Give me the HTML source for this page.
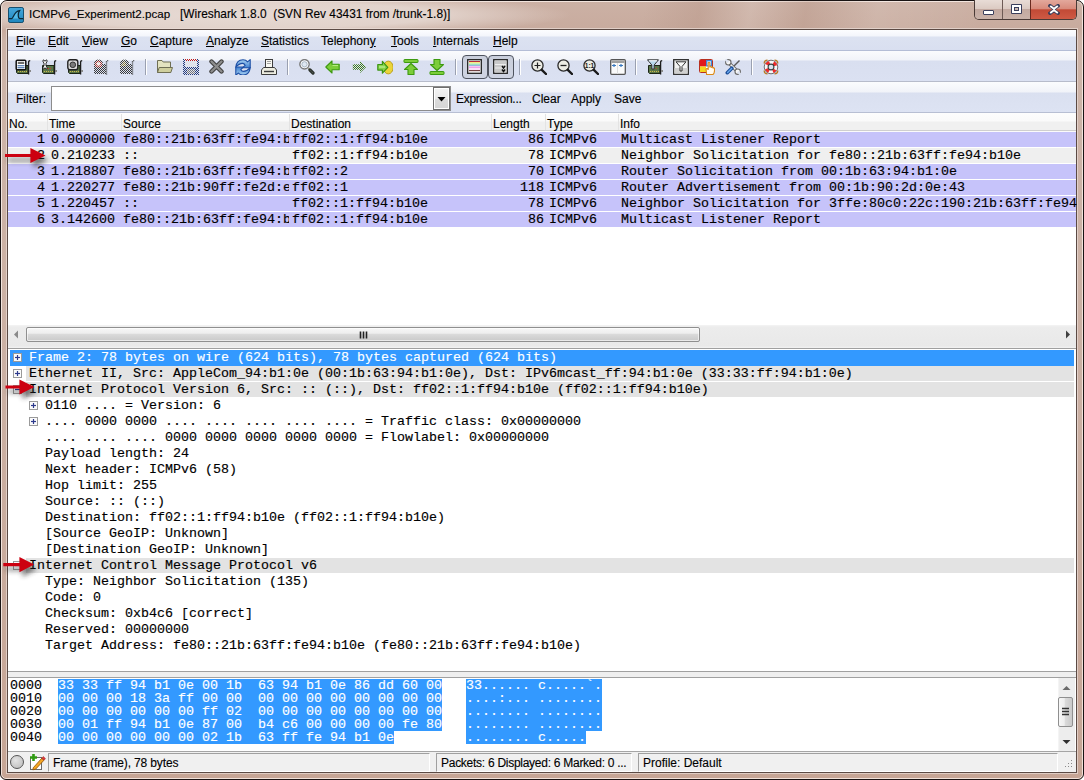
<!DOCTYPE html><html><head><meta charset="utf-8"><style>
*{margin:0;padding:0;box-sizing:border-box}
html,body{width:1084px;height:780px;overflow:hidden;background:#fff}
body{position:relative;font-family:"Liberation Sans",sans-serif}
.ab{position:absolute}
.mono{font-family:"Liberation Mono",monospace;font-size:13.333px;white-space:pre;line-height:16px;color:#000;-webkit-text-stroke:0.15px currentColor}
.ui{font-family:"Liberation Sans",sans-serif;font-size:12px;white-space:pre;color:#000;line-height:14px;-webkit-text-stroke:0.12px currentColor}
#frame{position:absolute;left:0;top:0;width:1084px;height:780px;border:1px solid #1a1414;border-radius:7px 7px 6px 6px;
 background:linear-gradient(to bottom,#ccb1a5 0,#c8ab9e 29px,#cdb4a8 40px,#cbb0a3 400px,#c6a595 780px);overflow:hidden}
#frame:before{content:"";position:absolute;left:0;top:0;right:0;bottom:0;border:1px solid rgba(255,245,240,.75);border-radius:6px 6px 5px 5px}
#client{position:absolute;left:7px;top:29px;width:1070px;height:744px;border:1px solid #5b4a44;background:#fff;box-shadow:0 0 0 1px rgba(235,222,216,.7)}
.bar{position:absolute;left:0;width:1068px}
</style></head><body>
<div id="frame">
<div class="ab" style="left:0;top:0;width:640px;height:29px;background:radial-gradient(ellipse 330px 22px at 240px 14px,rgba(232,220,214,.95) 0,rgba(232,220,214,.8) 60%,rgba(232,220,214,0) 100%)"></div>
<div class="ab" style="left:560px;top:0;width:420px;height:29px;background:linear-gradient(100deg,rgba(255,255,255,0) 0,rgba(255,255,255,0) 20%,rgba(180,145,130,.35) 33%,rgba(255,255,255,.12) 45%,rgba(180,145,130,.3) 58%,rgba(255,255,255,.1) 75%,rgba(255,255,255,0) 100%)"></div>
</div>
<svg class="ab" style="left:8px;top:7px" width="16" height="16" viewBox="0 0 16 16">
<defs><linearGradient id="wsg" x1="0" y1="0" x2="0" y2="1"><stop offset="0" stop-color="#46a8dc"/><stop offset="1" stop-color="#1f86bd"/></linearGradient></defs>
<rect x="0.5" y="0.5" width="15" height="15" rx="1.6" fill="url(#wsg)" stroke="#174f6e"/>
<path d="M4 11.5 C5.5 11.5 6 4.5 11.5 3.8 C9.8 6.2 10 11.5 11.8 11.5Z" fill="#5cc4f0" opacity=".8"/>
<path d="M0.8 11.5 H3.8 C5.4 11.5 5.8 4.2 11.6 3.6 C9.6 6.2 9.9 11.5 11.8 11.5 H15.2" fill="none" stroke="#0c2a3a" stroke-width="1.25"/>
</svg>
<div class="ab ui" style="left:29px;top:7px;font-size:11.6px;color:#000">ICMPv6_Experiment2.pcap</div>
<div class="ab ui" style="left:180px;top:7px;font-size:11.9px;color:#000">[Wireshark 1.8.0  (SVN Rev 43431 from /trunk-1.8)]</div>
<div class="ab" style="left:974px;top:0;width:103px;height:20px;border:1px solid #4a3a36;border-top:none;border-radius:0 0 5px 5px;overflow:hidden;background:#cbb3a8">
<div class="ab" style="left:0;top:0;width:27px;height:19px;background:linear-gradient(#e8dcd6 0,#dccbc3 45%,#c3a9a0 50%,#c9b2a9 100%)"></div>
<div class="ab" style="left:27px;top:0;width:1px;height:19px;background:#6d5a55"></div>
<div class="ab" style="left:28px;top:0;width:27px;height:19px;background:linear-gradient(#e8dcd6 0,#dccbc3 45%,#c3a9a0 50%,#c9b2a9 100%)"></div>
<div class="ab" style="left:55px;top:0;width:1px;height:19px;background:#6a2a20"></div>
<div class="ab" style="left:56px;top:0;width:46px;height:19px;background:linear-gradient(#e3a89c 0,#d88b7c 45%,#c24a36 52%,#cf5a44 100%)"></div>
<div class="ab" style="left:8px;top:10px;width:11px;height:5px;background:#fff;border:1px solid #3b3f5c;border-radius:1px"></div>
<div class="ab" style="left:36px;top:4px;width:11px;height:10px;background:#3b3f5c;border-radius:1px;padding:1px"><div style="width:9px;height:8px;background:#fff;padding:2px 2px"><div style="width:5px;height:4px;background:#3b3f5c;padding:1px"><div style="width:3px;height:2px;background:#cdb9b1"></div></div></div></div>
<svg class="ab" style="left:73px;top:4px" width="12" height="11" viewBox="0 0 12 11"><path d="M2 1.8 L6 4.6 L10 1.8 M2 9.2 L6 6.4 L10 9.2" stroke="#3b3f5c" stroke-width="3.6" fill="none" stroke-linecap="square"/><path d="M2.2 2 L6 4.8 L9.8 2 M2.2 9 L6 6.2 L9.8 9" stroke="#fff" stroke-width="1.8" fill="none"/></svg>
</div>
<div id="client">
<div class="bar" style="top:0;height:20px;background:linear-gradient(#fcfdff 0,#f3f5fb 6px,#dce2f1 7px,#d9dff0 20px)"></div>
<div class="bar" style="top:20px;height:1px;background:#b4bdd6"></div>
<div class="ab ui" style="left:8px;top:4px;text-decoration-thickness:1px"><u>F</u>ile</div>
<div class="ab ui" style="left:40px;top:4px;text-decoration-thickness:1px"><u>E</u>dit</div>
<div class="ab ui" style="left:74px;top:4px;text-decoration-thickness:1px"><u>V</u>iew</div>
<div class="ab ui" style="left:113px;top:4px;text-decoration-thickness:1px"><u>G</u>o</div>
<div class="ab ui" style="left:142px;top:4px;text-decoration-thickness:1px"><u>C</u>apture</div>
<div class="ab ui" style="left:198px;top:4px;text-decoration-thickness:1px"><u>A</u>nalyze</div>
<div class="ab ui" style="left:253px;top:4px;text-decoration-thickness:1px"><u>S</u>tatistics</div>
<div class="ab ui" style="left:313px;top:4px;text-decoration-thickness:1px">Telephon<u>y</u></div>
<div class="ab ui" style="left:383px;top:4px;text-decoration-thickness:1px"><u>T</u>ools</div>
<div class="ab ui" style="left:425px;top:4px;text-decoration-thickness:1px"><u>I</u>nternals</div>
<div class="ab ui" style="left:485px;top:4px;text-decoration-thickness:1px"><u>H</u>elp</div>
<div class="bar" style="top:21px;height:30px;background:linear-gradient(#fafbfd 0,#f1f3f9 9px,#d9dff0 10px,#dbe1f2 30px)"></div>
<div class="bar" style="top:51px;height:1px;background:#b7bccb"></div>
<div class="bar" style="top:52px;height:30px;background:linear-gradient(#fbfcfe 0,#f1f3f9 10px,#dae0f0 11px,#dde3f3 30px)"></div>
<div class="bar" style="top:82px;height:1px;background:#b8bfd3"></div>
<div class="ab ui" style="left:8px;top:62px">Filter:</div>
<div class="ab" style="left:43px;top:56px;width:400px;height:25px;background:#fff;border:1px solid #8c8c8c"></div>
<div class="ab" style="left:425px;top:57px;width:17px;height:23px;border:1px solid #6e6e6e;background:#fff;padding:1px"><div style="width:13px;height:19px;background:linear-gradient(#f2f2f2,#e9e9e9 50%,#dcdcdc 52%,#d6d6d6)"></div></div>
<svg class="ab" style="left:429px;top:67px" width="9" height="5"><path d="M0.5 0H8.5L4.5 4.5Z" fill="#000"/></svg>
<div class="ab ui" style="left:448px;top:62px;letter-spacing:-0.3px">Expression...</div>
<div class="ab ui" style="left:524px;top:62px;letter-spacing:0px">Clear</div>
<div class="ab ui" style="left:563px;top:62px;letter-spacing:0px">Apply</div>
<div class="ab ui" style="left:606px;top:62px;letter-spacing:0px">Save</div>
<div class="bar" style="top:83px;height:17px;background:linear-gradient(#fdfdfd 0,#fafafa 8px,#f0f0f0 9px,#f0f0f0 17px)"></div>
<div class="bar" style="top:100px;height:1px;background:#cfcfcf"></div>
<div class="bar" style="top:101px;height:1px;background:#fbfbfb"></div>
<div class="ab" style="left:39px;top:84px;width:1px;height:16px;background:#e3e3e3"></div>
<div class="ab" style="left:113px;top:84px;width:1px;height:16px;background:#e3e3e3"></div>
<div class="ab" style="left:281px;top:84px;width:1px;height:16px;background:#e3e3e3"></div>
<div class="ab" style="left:483px;top:84px;width:1px;height:16px;background:#e3e3e3"></div>
<div class="ab" style="left:537px;top:84px;width:1px;height:16px;background:#e3e3e3"></div>
<div class="ab" style="left:610px;top:84px;width:1px;height:16px;background:#e3e3e3"></div>
<div class="ab ui" style="left:1px;top:87px">No.</div>
<div class="ab ui" style="left:41px;top:87px">Time</div>
<div class="ab ui" style="left:115px;top:87px">Source</div>
<div class="ab ui" style="left:283px;top:87px">Destination</div>
<div class="ab ui" style="left:485px;top:87px">Length</div>
<div class="ab ui" style="left:539px;top:87px">Type</div>
<div class="ab ui" style="left:612px;top:87px">Info</div>
<div class="bar" style="top:102px;height:15px;background:#c6c3fa"></div>
<div class="ab mono" style="left:29px;top:102px">1</div>
<div class="ab mono" style="left:43px;top:102px">0.000000</div>
<div class="ab mono" style="left:115px;top:102px;width:166px;overflow:hidden">fe80::21b:63ff:fe94:b10e</div>
<div class="ab mono" style="left:284px;top:102px">ff02::1:ff94:b10e</div>
<div class="ab mono" style="left:520px;top:102px">86</div>
<div class="ab mono" style="left:541px;top:102px">ICMPv6</div>
<div class="ab mono" style="left:613px;top:102px;width:456px;overflow:hidden">Multicast Listener Report</div>
<div class="bar" style="top:118px;height:15px;background:#efefef"></div>
<div class="ab mono" style="left:29px;top:118px">2</div>
<div class="ab mono" style="left:43px;top:118px">0.210233</div>
<div class="ab mono" style="left:115px;top:118px;width:166px;overflow:hidden">::</div>
<div class="ab mono" style="left:284px;top:118px">ff02::1:ff94:b10e</div>
<div class="ab mono" style="left:520px;top:118px">78</div>
<div class="ab mono" style="left:541px;top:118px">ICMPv6</div>
<div class="ab mono" style="left:613px;top:118px;width:456px;overflow:hidden">Neighbor Solicitation for fe80::21b:63ff:fe94:b10e</div>
<div class="bar" style="top:134px;height:15px;background:#c6c3fa"></div>
<div class="ab mono" style="left:29px;top:134px">3</div>
<div class="ab mono" style="left:43px;top:134px">1.218807</div>
<div class="ab mono" style="left:115px;top:134px;width:166px;overflow:hidden">fe80::21b:63ff:fe94:b10e</div>
<div class="ab mono" style="left:284px;top:134px">ff02::2</div>
<div class="ab mono" style="left:520px;top:134px">70</div>
<div class="ab mono" style="left:541px;top:134px">ICMPv6</div>
<div class="ab mono" style="left:613px;top:134px;width:456px;overflow:hidden">Router Solicitation from 00:1b:63:94:b1:0e</div>
<div class="bar" style="top:150px;height:15px;background:#c6c3fa"></div>
<div class="ab mono" style="left:29px;top:150px">4</div>
<div class="ab mono" style="left:43px;top:150px">1.220277</div>
<div class="ab mono" style="left:115px;top:150px;width:166px;overflow:hidden">fe80::21b:90ff:fe2d:e43</div>
<div class="ab mono" style="left:284px;top:150px">ff02::1</div>
<div class="ab mono" style="left:512px;top:150px">118</div>
<div class="ab mono" style="left:541px;top:150px">ICMPv6</div>
<div class="ab mono" style="left:613px;top:150px;width:456px;overflow:hidden">Router Advertisement from 00:1b:90:2d:0e:43</div>
<div class="bar" style="top:166px;height:15px;background:#c6c3fa"></div>
<div class="ab mono" style="left:29px;top:166px">5</div>
<div class="ab mono" style="left:43px;top:166px">1.220457</div>
<div class="ab mono" style="left:115px;top:166px;width:166px;overflow:hidden">::</div>
<div class="ab mono" style="left:284px;top:166px">ff02::1:ff94:b10e</div>
<div class="ab mono" style="left:520px;top:166px">78</div>
<div class="ab mono" style="left:541px;top:166px">ICMPv6</div>
<div class="ab mono" style="left:613px;top:166px;width:456px;overflow:hidden">Neighbor Solicitation for 3ffe:80c0:22c:190:21b:63ff:fe94:b10e</div>
<div class="bar" style="top:182px;height:15px;background:#c6c3fa"></div>
<div class="ab mono" style="left:29px;top:182px">6</div>
<div class="ab mono" style="left:43px;top:182px">3.142600</div>
<div class="ab mono" style="left:115px;top:182px;width:166px;overflow:hidden">fe80::21b:63ff:fe94:b10e</div>
<div class="ab mono" style="left:284px;top:182px">ff02::1:ff94:b10e</div>
<div class="ab mono" style="left:520px;top:182px">86</div>
<div class="ab mono" style="left:541px;top:182px">ICMPv6</div>
<div class="ab mono" style="left:613px;top:182px;width:456px;overflow:hidden">Multicast Listener Report</div>
<div class="bar" style="top:295px;height:23px;background:linear-gradient(#f4f4f4 0,#ececec 2px,#e9e9e9 21px,#f2f2f2 23px)"></div>
<svg class="ab" style="left:5px;top:300px" width="8" height="9"><path d="M5 0.5 L1 4.5 L5 8.5Z" fill="#8a8a8a"/></svg>
<svg class="ab" style="left:1056px;top:300px" width="8" height="9"><path d="M2 0.5 L6 4.5 L2 8.5Z" fill="#404040"/></svg>
<div class="ab" style="left:18px;top:297px;width:674px;height:15px;border:1px solid #8f8f8f;border-radius:2px;background:linear-gradient(#f7f7f7 0,#eeeeee 40%,#dadada 50%,#c9c9c9 100%);box-shadow:inset 0 0 0 1px rgba(255,255,255,.6)"></div>
<svg class="ab" style="left:351px;top:301px" width="9" height="8"><path d="M1.5 0.5V7.5M4.5 0.5V7.5M7.5 0.5V7.5" stroke="#222" stroke-width="1.6"/></svg>
<div class="bar" style="top:318px;height:1px;background:#a0a0a0"></div>
<div class="ab" style="left:2px;top:320px;width:1064px;height:16px;background:#3399ff"></div>
<svg class="ab" style="left:5px;top:323px" width="9" height="9"><rect x="0.5" y="0.5" width="8" height="8" fill="#fbfbfb" stroke="#9a9a9a"/><path d="M2 4.5H7" stroke="#2d3a8c" stroke-width="1.2"/><path d="M4.5 2V7" stroke="#2d3a8c" stroke-width="1.2"/></svg>
<div class="ab mono" style="left:21px;top:320px;color:#fff">Frame 2: 78 bytes on wire (624 bits), 78 bytes captured (624 bits)</div>
<div class="ab" style="left:18px;top:336px;width:1048px;height:15px;background:#e3e3e3"></div>
<svg class="ab" style="left:5px;top:339px" width="9" height="9"><rect x="0.5" y="0.5" width="8" height="8" fill="#fbfbfb" stroke="#9a9a9a"/><path d="M2 4.5H7" stroke="#2d3a8c" stroke-width="1.2"/><path d="M4.5 2V7" stroke="#2d3a8c" stroke-width="1.2"/></svg>
<div class="ab mono" style="left:21px;top:336px;color:#000">Ethernet II, Src: AppleCom_94:b1:0e (00:1b:63:94:b1:0e), Dst: IPv6mcast_ff:94:b1:0e (33:33:ff:94:b1:0e)</div>
<div class="ab" style="left:18px;top:352px;width:1048px;height:15px;background:#e3e3e3"></div>
<svg class="ab" style="left:5px;top:355px" width="9" height="9"><rect x="0.5" y="0.5" width="8" height="8" fill="#fbfbfb" stroke="#9a9a9a"/><path d="M2 4.5H7" stroke="#2d3a8c" stroke-width="1.2"/></svg>
<div class="ab mono" style="left:21px;top:352px;color:#000">Internet Protocol Version 6, Src: :: (::), Dst: ff02::1:ff94:b10e (ff02::1:ff94:b10e)</div>
<svg class="ab" style="left:21px;top:371px" width="9" height="9"><rect x="0.5" y="0.5" width="8" height="8" fill="#fbfbfb" stroke="#9a9a9a"/><path d="M2 4.5H7" stroke="#2d3a8c" stroke-width="1.2"/><path d="M4.5 2V7" stroke="#2d3a8c" stroke-width="1.2"/></svg>
<div class="ab mono" style="left:37px;top:368px;color:#000">0110 .... = Version: 6</div>
<svg class="ab" style="left:21px;top:387px" width="9" height="9"><rect x="0.5" y="0.5" width="8" height="8" fill="#fbfbfb" stroke="#9a9a9a"/><path d="M2 4.5H7" stroke="#2d3a8c" stroke-width="1.2"/><path d="M4.5 2V7" stroke="#2d3a8c" stroke-width="1.2"/></svg>
<div class="ab mono" style="left:37px;top:384px;color:#000">.... 0000 0000 .... .... .... .... .... = Traffic class: 0x00000000</div>
<div class="ab mono" style="left:37px;top:400px;color:#000">.... .... .... 0000 0000 0000 0000 0000 = Flowlabel: 0x00000000</div>
<div class="ab mono" style="left:37px;top:416px;color:#000">Payload length: 24</div>
<div class="ab mono" style="left:37px;top:432px;color:#000">Next header: ICMPv6 (58)</div>
<div class="ab mono" style="left:37px;top:448px;color:#000">Hop limit: 255</div>
<div class="ab mono" style="left:37px;top:464px;color:#000">Source: :: (::)</div>
<div class="ab mono" style="left:37px;top:480px;color:#000">Destination: ff02::1:ff94:b10e (ff02::1:ff94:b10e)</div>
<div class="ab mono" style="left:37px;top:496px;color:#000">[Source GeoIP: Unknown]</div>
<div class="ab mono" style="left:37px;top:512px;color:#000">[Destination GeoIP: Unknown]</div>
<div class="ab" style="left:18px;top:528px;width:1048px;height:15px;background:#e3e3e3"></div>
<svg class="ab" style="left:5px;top:531px" width="9" height="9"><rect x="0.5" y="0.5" width="8" height="8" fill="#fbfbfb" stroke="#9a9a9a"/><path d="M2 4.5H7" stroke="#2d3a8c" stroke-width="1.2"/></svg>
<div class="ab mono" style="left:21px;top:528px;color:#000">Internet Control Message Protocol v6</div>
<div class="ab mono" style="left:37px;top:544px;color:#000">Type: Neighbor Solicitation (135)</div>
<div class="ab mono" style="left:37px;top:560px;color:#000">Code: 0</div>
<div class="ab mono" style="left:37px;top:576px;color:#000">Checksum: 0xb4c6 [correct]</div>
<div class="ab mono" style="left:37px;top:592px;color:#000">Reserved: 00000000</div>
<div class="ab mono" style="left:37px;top:608px;color:#000">Target Address: fe80::21b:63ff:fe94:b10e (fe80::21b:63ff:fe94:b10e)</div>
<div class="bar" style="top:641px;height:1px;background:#a0a0a0"></div>
<div class="bar" style="top:642px;height:5px;background:#efefef"></div>
<div class="bar" style="top:647px;height:1px;background:#a0a0a0"></div>
<div class="ab mono" style="left:2px;top:649px;line-height:13px">0000</div>
<div class="ab mono" style="left:50px;top:649px;line-height:13px;background:#3399ff;color:#fff">33 33 ff 94 b1 0e 00 1b  63 94 b1 0e 86 dd 60 00</div>
<div class="ab mono" style="left:458px;top:649px;line-height:13px;background:#3399ff;color:#fff">33...... c.....`.</div>
<div class="ab mono" style="left:2px;top:662px;line-height:13px">0010</div>
<div class="ab mono" style="left:50px;top:662px;line-height:13px;background:#3399ff;color:#fff">00 00 00 18 3a ff 00 00  00 00 00 00 00 00 00 00</div>
<div class="ab mono" style="left:458px;top:662px;line-height:13px;background:#3399ff;color:#fff">....:... ........</div>
<div class="ab mono" style="left:2px;top:675px;line-height:13px">0020</div>
<div class="ab mono" style="left:50px;top:675px;line-height:13px;background:#3399ff;color:#fff">00 00 00 00 00 00 ff 02  00 00 00 00 00 00 00 00</div>
<div class="ab mono" style="left:458px;top:675px;line-height:13px;background:#3399ff;color:#fff">........ ........</div>
<div class="ab mono" style="left:2px;top:688px;line-height:13px">0030</div>
<div class="ab mono" style="left:50px;top:688px;line-height:13px;background:#3399ff;color:#fff">00 01 ff 94 b1 0e 87 00  b4 c6 00 00 00 00 fe 80</div>
<div class="ab mono" style="left:458px;top:688px;line-height:13px;background:#3399ff;color:#fff">........ ........</div>
<div class="ab mono" style="left:2px;top:701px;line-height:13px">0040</div>
<div class="ab mono" style="left:50px;top:701px;line-height:13px;background:#3399ff;color:#fff">00 00 00 00 00 00 02 1b  63 ff fe 94 b1 0e</div>
<div class="ab mono" style="left:458px;top:701px;line-height:13px;background:#3399ff;color:#fff">........ c.....</div>
<div class="ab" style="left:1050px;top:648px;width:17px;height:73px;background:#ededed;border-left:1px solid #f4f4f4"></div>
<svg class="ab" style="left:1054px;top:655px" width="9" height="6"><path d="M0.5 5L4.5 1L8.5 5Z" fill="#6a6a6a"/></svg>
<svg class="ab" style="left:1054px;top:709px" width="9" height="6"><path d="M0.5 1L4.5 5L8.5 1Z" fill="#303030"/></svg>
<div class="ab" style="left:1050px;top:667px;width:15px;height:30px;border:1px solid #8f8f8f;border-radius:2px;background:linear-gradient(to right,#f7f7f7 0,#eeeeee 40%,#dadada 50%,#c9c9c9 100%)"></div>
<svg class="ab" style="left:1053px;top:677px" width="9" height="9"><path d="M1 1.5H8M1 4.5H8M1 7.5H8" stroke="#333" stroke-width="1.4"/></svg>
<div class="bar" style="top:721px;height:1px;background:#a5a5a5"></div>
<div class="bar" style="top:722px;height:20px;background:#f0f0f0"></div>
<div class="ab" style="left:2px;top:725px;width:14px;height:14px;border-radius:50%;border:1px solid #555;background:radial-gradient(circle at 40% 35%,#e4e4e4,#b9b9b9)"></div>
<svg class="ab" style="left:21px;top:723px" width="17" height="18" viewBox="0 0 17 18">
<rect x="1.5" y="4.5" width="11" height="12" fill="#fff" stroke="#6a6a6a"/>
<path d="M1 4.5H8M4.5 1V8" stroke="#2f9a12" stroke-width="2.6"/>
<path d="M4.2 14.8 L12.8 5.2 L15 7.2 L6.6 16.2 L3.8 16.8Z" fill="#f5a623" stroke="#8a5008" stroke-width=".8"/>
<path d="M12.8 5.2 L14.2 3.6 L16.4 5.6 L15 7.2Z" fill="#e23a3a" stroke="#9a2020" stroke-width=".6"/>
</svg>
<div class="ab" style="left:40px;top:723px;width:382px;height:19px;border-top:1px solid #a0a0a0;border-left:1px solid #a0a0a0;border-bottom:1px solid #fff;border-right:1px solid #fff;background:#f0f0f0"></div>
<div class="ab" style="left:428px;top:723px;width:196px;height:19px;border-top:1px solid #a0a0a0;border-left:1px solid #a0a0a0;border-bottom:1px solid #fff;border-right:1px solid #fff;background:#f0f0f0"></div>
<div class="ab" style="left:630px;top:723px;width:420px;height:19px;border-top:1px solid #a0a0a0;border-left:1px solid #a0a0a0;border-bottom:1px solid #fff;border-right:1px solid #fff;background:#f0f0f0"></div>
<div class="ab ui" style="left:45px;top:726px;letter-spacing:-0.15px">Frame (frame), 78 bytes</div>
<div class="ab ui" style="left:433px;top:726px;letter-spacing:-0.27px">Packets: 6 Displayed: 6 Marked: 0 ...</div>
<div class="ab ui" style="left:635px;top:726px;letter-spacing:0px">Profile: Default</div>
<svg class="ab" style="left:1056px;top:729px" width="10" height="10"><g fill="#8a8a8a"><rect x="7" y="1" width="1" height="1"/><rect x="4" y="4" width="1" height="1"/><rect x="7" y="4" width="1" height="1"/><rect x="1" y="7" width="1" height="1"/><rect x="4" y="7" width="1" height="1"/><rect x="7" y="7" width="1" height="1"/></g></svg>
</div>
<div class="ab" style="left:462px;top:55px;width:26px;height:24px;border:1px solid #4e535e;border-radius:4px;background:linear-gradient(#c9cedb,#cfd4e2)"></div>
<div class="ab" style="left:488px;top:55px;width:26px;height:24px;border:1px solid #4e535e;border-radius:4px;background:linear-gradient(#c9cedb,#cfd4e2)"></div>
<div class="ab" style="left:145px;top:59px;width:1px;height:16px;background:#9aa0b0;box-shadow:1px 0 0 #fff"></div>
<div class="ab" style="left:287px;top:59px;width:1px;height:16px;background:#9aa0b0;box-shadow:1px 0 0 #fff"></div>
<div class="ab" style="left:455px;top:59px;width:1px;height:16px;background:#9aa0b0;box-shadow:1px 0 0 #fff"></div>
<div class="ab" style="left:519px;top:59px;width:1px;height:16px;background:#9aa0b0;box-shadow:1px 0 0 #fff"></div>
<div class="ab" style="left:635px;top:59px;width:1px;height:16px;background:#9aa0b0;box-shadow:1px 0 0 #fff"></div>
<div class="ab" style="left:751px;top:59px;width:1px;height:16px;background:#9aa0b0;box-shadow:1px 0 0 #fff"></div>
<svg class="ab" style="left:15px;top:59px" width="16" height="16" viewBox="0 0 16 16"><path d="M1.5 6.5H13V14.5H2.5L1.5 13.5Z" fill="#5a7548" stroke="#1c2616"/><path d="M3 12.5H12" stroke="#c9b94a" stroke-dasharray="1 1"/><path d="M6 9.5H8M9 9.5H10" stroke="#c04030" stroke-width="1"/><path d="M13.6 15.5V3.2Q13.6 1.6 15.2 1.6" stroke="#1d1d1d" stroke-width="1.3" fill="none"/><rect x="14" y="11" width="2" height="2" fill="#8a8a8a"/><rect x="1.2" y="1.2" width="9.6" height="9.6" rx="1" fill="#fff" stroke="#111" stroke-width="1.5"/><rect x="2.8" y="2.8" width="6.4" height="2.2" fill="#6e6e6e"/><path d="M2.5 6.7H9.5M2.5 8.7H9.5" stroke="#2f5f9f" stroke-width="1.1"/></svg>
<svg class="ab" style="left:41px;top:59px" width="16" height="16" viewBox="0 0 16 16"><path d="M1.5 6.5H13V14.5H2.5L1.5 13.5Z" fill="#5a7548" stroke="#1c2616"/><path d="M3 12.5H12" stroke="#c9b94a" stroke-dasharray="1 1"/><path d="M6 9.5H8M9 9.5H10" stroke="#c04030" stroke-width="1"/><path d="M13.6 15.5V3.2Q13.6 1.6 15.2 1.6" stroke="#1d1d1d" stroke-width="1.3" fill="none"/><rect x="14" y="11" width="2" height="2" fill="#8a8a8a"/><path d="M2 1.5Q2 0.5 3 1L3.5 2H4.5L5 1Q6 0.5 6 1.5V3L5 4V7L6 8V9.5Q6 10.5 5 10L4.5 9H3.5L3 10Q2 10.5 2 9.5V8L3 7V4L2 3Z" fill="#f4f4f4" stroke="#222" stroke-width=".9"/></svg>
<svg class="ab" style="left:67px;top:59px" width="16" height="16" viewBox="0 0 16 16"><path d="M1.5 6.5H13V14.5H2.5L1.5 13.5Z" fill="#5a7548" stroke="#1c2616"/><path d="M3 12.5H12" stroke="#c9b94a" stroke-dasharray="1 1"/><path d="M6 9.5H8M9 9.5H10" stroke="#c04030" stroke-width="1"/><path d="M13.6 15.5V3.2Q13.6 1.6 15.2 1.6" stroke="#1d1d1d" stroke-width="1.3" fill="none"/><rect x="14" y="11" width="2" height="2" fill="#8a8a8a"/><rect x="0.8" y="0.8" width="10" height="10" rx="2.2" fill="#d8d8d8" stroke="#222" stroke-width="1.4"/><circle cx="5.8" cy="5.8" r="2.8" fill="#7a7a7a" stroke="#333" stroke-width="1"/></svg>
<svg class="ab" style="left:93px;top:59px" width="16" height="16" viewBox="0 0 16 16"><defs><pattern id="ck1" width="2" height="2" patternUnits="userSpaceOnUse"><rect width="1" height="1" fill="#3a3a3a"/><rect x="1" y="1" width="1" height="1" fill="#3a3a3a"/></pattern><pattern id="ck2" width="2" height="2" patternUnits="userSpaceOnUse"><rect width="1" height="1" fill="#b03020"/><rect x="1" y="1" width="1" height="1" fill="#b03020"/></pattern></defs><path d="M1 5H13V15H2L1 14Z" fill="url(#ck1)"/><path d="M13.5 15.5V3.2Q13.5 1.6 15.2 1.6" stroke="#333" stroke-width="1.4" fill="none" stroke-dasharray="1 1"/><circle cx="5.5" cy="5" r="4.6" fill="url(#ck1)"/><circle cx="5.5" cy="5" r="3.6" fill="url(#ck2)"/><circle cx="5.5" cy="5" r="1.8" fill="#f2ecea"/></svg>
<svg class="ab" style="left:119px;top:59px" width="16" height="16" viewBox="0 0 16 16"><defs><pattern id="ck3" width="2" height="2" patternUnits="userSpaceOnUse"><rect width="1" height="1" fill="#8a7a30"/><rect x="1" y="1" width="1" height="1" fill="#8a7a30"/></pattern></defs><path d="M1 5H13V15H2L1 14Z" fill="url(#ck1)"/><path d="M13.5 15.5V3.2Q13.5 1.6 15.2 1.6" stroke="#333" stroke-width="1.4" fill="none" stroke-dasharray="1 1"/><circle cx="5.5" cy="5" r="4.6" fill="url(#ck1)"/><path d="M2 7Q3.5 2.5 6 1.5Q5.5 4 8.5 7Z" fill="url(#ck3)"/></svg>
<svg class="ab" style="left:157px;top:59px" width="16" height="16" viewBox="0 0 16 16"><path d="M0.5 1.5H5L6.2 3H13.5V13.5H0.5Z" fill="#e3e3c0" stroke="#6f6f55"/><path d="M2.2 8.5H15.5L13.8 13.5H0.5Z" fill="#cfcf9e" stroke="#6f6f55"/></svg>
<svg class="ab" style="left:183px;top:59px" width="16" height="16" viewBox="0 0 16 16"><defs><pattern id="ck4" width="2" height="2" patternUnits="userSpaceOnUse"><rect width="1" height="1" fill="#243a7a"/><rect x="1" y="1" width="1" height="1" fill="#243a7a"/></pattern><pattern id="ck5" width="2" height="2" patternUnits="userSpaceOnUse"><rect width="1" height="1" fill="#c01818"/><rect x="1" y="1" width="1" height="1" fill="#c01818"/></pattern><pattern id="ck6" width="2" height="2" patternUnits="userSpaceOnUse"><rect width="1" height="1" fill="#e8e8e8"/><rect x="1" y="1" width="1" height="1" fill="#e8e8e8"/></pattern><pattern id="ck7" width="2" height="2" patternUnits="userSpaceOnUse"><rect width="1" height="1" fill="#777"/><rect x="1" y="1" width="1" height="1" fill="#777"/></pattern></defs><rect x="0" y="0" width="16" height="16" fill="url(#ck4)"/><rect x="2" y="0" width="12" height="2" fill="url(#ck5)"/><rect x="2" y="2" width="12" height="6" fill="url(#ck6)"/><rect x="4" y="10" width="8" height="5" fill="url(#ck7)"/></svg>
<svg class="ab" style="left:209px;top:59px" width="16" height="16" viewBox="0 0 16 16"><path d="M2.5 2.5L12.5 12.5M12.5 2.5L2.5 12.5" stroke="#3e3e3e" stroke-width="4.4" stroke-linecap="round"/><path d="M2.5 2.5L12.5 12.5M12.5 2.5L2.5 12.5" stroke="#8c8c8c" stroke-width="2.4" stroke-linecap="round"/></svg>
<svg class="ab" style="left:235px;top:59px" width="16" height="16" viewBox="0 0 16 16"><defs><linearGradient id="rg" x1="0" y1="0" x2="0" y2="1"><stop offset="0" stop-color="#a9d2f2"/><stop offset="1" stop-color="#3f7fd0"/></linearGradient></defs><g id="rl"><path d="M0.8 8.2 Q1.6 0.8 8 0.8 Q11 0.8 12.6 2.8 L15.2 0.6 V8.8 H7.4 L10.2 6.4 Q9.2 4.4 7.6 4.4 Q4 4.4 0.8 8.2Z" fill="url(#rg)" stroke="#1d4fa5" stroke-width="1.1" stroke-linejoin="round"/></g><use href="#rl" transform="rotate(180 8 8.4)"/></svg>
<svg class="ab" style="left:261px;top:59px" width="16" height="16" viewBox="0 0 16 16"><rect x="4.5" y="0.5" width="7" height="8" fill="#f8f8f2" stroke="#3d3d3d"/><path d="M6 2.5H10M6 4.5H10" stroke="#8a8a8a" stroke-width=".8"/><path d="M2.5 8.5H13.5L15.5 11V15.5H0.5V11Z" fill="#ecece0" stroke="#3d3d3d"/><path d="M3 12.5H13" stroke="#3d3d3d" stroke-width="1.4"/></svg>
<svg class="ab" style="left:299px;top:59px" width="16" height="16" viewBox="0 0 16 16"><circle cx="5.5" cy="5.3" r="4.6" fill="#dfe8f2" stroke="#7d7d7d" stroke-width="1.6"/><circle cx="5.5" cy="5.3" r="3.5" fill="none" stroke="#fafafa" stroke-width=".9"/><circle cx="5.5" cy="5.3" r="2.6" fill="none" stroke="#8d9aa8" stroke-width=".6"/><path d="M9.3 9.2L10.6 10.5" stroke="#9a9a80" stroke-width="1.8"/><path d="M11 11L14 14" stroke="#2e3430" stroke-width="3.2" stroke-linecap="round"/><path d="M11.6 11.6L13.5 13.5" stroke="#7a8a7a" stroke-width=".8" stroke-dasharray="1 1"/></svg>
<svg class="ab" style="left:325px;top:59px" width="16" height="16" viewBox="0 0 16 16"><path d="M0.8 8L7 2V5.2H14.2V10.8H7V14Z" fill="#7ccd3a" stroke="#3d9a10" stroke-width="1.1" stroke-linejoin="round"/><path d="M7.5 6.5H13" stroke="#b5ec80" stroke-width="1"/></svg>
<svg class="ab" style="left:351px;top:59px" width="16" height="16" viewBox="0 0 16 16"><defs><pattern id="ck8" width="2" height="2" patternUnits="userSpaceOnUse"><rect width="1" height="1" fill="#3e7a1a"/><rect x="1" y="1" width="1" height="1" fill="#3e7a1a"/></pattern></defs><path d="M15.2 8L9 2V5.2H1.8V10.8H9V14Z" fill="url(#ck8)"/></svg>
<svg class="ab" style="left:377px;top:59px" width="16" height="16" viewBox="0 0 16 16"><ellipse cx="11.3" cy="8.5" rx="4.9" ry="6.4" fill="#ead43a" stroke="#b89a18" stroke-width=".9"/><path d="M0.8 5.5H5.4V2.4L10.8 8.3L5.4 14.2V11.1H0.8Z" fill="#86d44a" stroke="#3b9412" stroke-width="1.2" stroke-linejoin="round"/><path d="M2 8H8" stroke="#b8f090" stroke-width="1.4"/></svg>
<svg class="ab" style="left:403px;top:59px" width="16" height="16" viewBox="0 0 16 16"><rect x="1" y="0.5" width="14" height="3" rx=".5" fill="#7ccd3a" stroke="#3d9a10"/><path d="M8 4.5L14.5 10.5H11V15.5H5V10.5H1.5Z" fill="#7ccd3a" stroke="#3d9a10" stroke-width="1.1" stroke-linejoin="round"/></svg>
<svg class="ab" style="left:429px;top:59px" width="16" height="16" viewBox="0 0 16 16"><rect x="1" y="12.5" width="14" height="3" rx=".5" fill="#7ccd3a" stroke="#3d9a10"/><path d="M8 11.5L14.5 5.5H11V0.5H5V5.5H1.5Z" fill="#7ccd3a" stroke="#3d9a10" stroke-width="1.1" stroke-linejoin="round"/></svg>
<svg class="ab" style="left:467px;top:59px" width="15" height="15" viewBox="0 0 15 15"><rect x="0.7" y="0.7" width="13.6" height="13.6" fill="#fff" stroke="#222" stroke-width="1.3"/><path d="M2 2.5H13" stroke="#b52a3a"/><path d="M2 3.8H13" stroke="#f0e050"/><path d="M2 5.2H13" stroke="#70d8a0"/><path d="M2 6.6H13" stroke="#90b0e0"/><path d="M2 8.2H13" stroke="#f0a0e8" stroke-width="1.6"/><path d="M2 10H13" stroke="#f4c0f0"/><path d="M2 11.6H13" stroke="#704040" stroke-width="1.2"/></svg>
<svg class="ab" style="left:493px;top:59px" width="15" height="15" viewBox="0 0 15 15"><rect x="0.7" y="0.7" width="13.6" height="13.6" fill="#fff" stroke="#222" stroke-width="1.3"/><rect x="2" y="2" width="11" height="11" fill="#c9c9c9"/><path d="M2 5.5H13M2 9H13" stroke="#eee"/><path d="M9 7L10.5 9L12 7M9 10.5L10.5 12.5L12 10.5" stroke="#111" stroke-width="1.4" fill="none"/></svg>
<svg class="ab" style="left:531px;top:59px" width="16" height="16" viewBox="0 0 16 16"><circle cx="6.5" cy="6.5" r="5.6" fill="#ecece4" stroke="#2a2a2a" stroke-width="1.3"/><path d="M3.5 6.5H9.5M6.5 3.5V9.5" stroke="#222" stroke-width="1.2"/><path d="M10.8 10.8L15 15" stroke="#1a1a1a" stroke-width="2.4" stroke-linecap="round"/></svg>
<svg class="ab" style="left:557px;top:59px" width="16" height="16" viewBox="0 0 16 16"><circle cx="6.5" cy="6.5" r="5.6" fill="#ecece4" stroke="#2a2a2a" stroke-width="1.3"/><path d="M3.5 6.5H9.5" stroke="#222" stroke-width="1.3"/><path d="M10.8 10.8L15 15" stroke="#1a1a1a" stroke-width="2.4" stroke-linecap="round"/></svg>
<svg class="ab" style="left:583px;top:59px" width="16" height="16" viewBox="0 0 16 16"><circle cx="6.5" cy="6.5" r="5.6" fill="#ecece4" stroke="#2a2a2a" stroke-width="1.3"/><text x="6.5" y="8.8" font-family="Liberation Sans" font-size="6.5" font-weight="bold" text-anchor="middle" fill="#222">1:1</text><path d="M10.8 10.8L15 15" stroke="#1a1a1a" stroke-width="2.4" stroke-linecap="round"/></svg>
<svg class="ab" style="left:610px;top:59px" width="16" height="16" viewBox="0 0 16 16"><rect x="0.7" y="0.7" width="14.6" height="14.6" rx="1" fill="#fafafa" stroke="#555" stroke-width="1.3"/><rect x="1.4" y="1.4" width="13.2" height="2.6" fill="#a0a0a0"/><path d="M2 6.5H6M4 5V8M9 6.5H13M11 5V8" stroke="#3a7ac0" stroke-width="1.2"/><path d="M7.5 4V15" stroke="#ddd"/></svg>
<svg class="ab" style="left:647px;top:59px" width="16" height="16" viewBox="0 0 16 16"><path d="M1.5 6.5H13V14.5H2.5L1.5 13.5Z" fill="#5a7548" stroke="#1c2616"/><path d="M3 12.5H12" stroke="#c9b94a" stroke-dasharray="1 1"/><path d="M6 9.5H8M9 9.5H10" stroke="#c04030" stroke-width="1"/><path d="M13.6 15.5V3.2Q13.6 1.6 15.2 1.6" stroke="#1d1d1d" stroke-width="1.3" fill="none"/><rect x="14" y="11" width="2" height="2" fill="#8a8a8a"/><path d="M0.5 0.8H11.5L7.2 6V10H4.8V6Z" fill="#b8d8ec" stroke="#333" stroke-width="1"/><path d="M2 1.8H10" stroke="#fff"/></svg>
<svg class="ab" style="left:673px;top:59px" width="16" height="16" viewBox="0 0 16 16"><rect x="0.7" y="0.7" width="14.6" height="14.6" fill="#f2f2f2" stroke="#2a2a2a" stroke-width="1.3"/><rect x="1.4" y="9" width="13.2" height="5.6" fill="#d0d0d0"/><path d="M3 2.8H13L9 7.5V12H7V7.5Z" fill="#fafafa" stroke="#333" stroke-width="1"/></svg>
<svg class="ab" style="left:699px;top:59px" width="16" height="16" viewBox="0 0 16 16"><rect x="0.5" y="0.5" width="13" height="13" rx="1" fill="#fff" stroke="#b83020"/><rect x="1" y="1" width="6" height="6.5" fill="#e0181c"/><rect x="1" y="7.5" width="6" height="5.5" fill="#f4d61e"/><rect x="7" y="1" width="6" height="6.5" fill="#3f86d8"/><rect x="8.2" y="2.2" width="3.8" height="4" fill="#c8e0fa"/><path d="M7.5 15.5H14Q15.5 14 15.5 11.5V9.5Q15 8.6 14 9V8.4Q13.2 7.6 12.4 8.4V8Q11.6 7.2 10.8 8V3.8Q10 3 9.2 3.8V10.5L8.2 9.6Q7.2 9.4 7 10.4Q7.6 12.5 7.5 15.5Z" fill="#fffaf0" stroke="#dc8a18" stroke-width="1.1" stroke-linejoin="round"/></svg>
<svg class="ab" style="left:725px;top:59px" width="16" height="16" viewBox="0 0 16 16"><path d="M14.5 1.5L8 8" stroke="#5a5a5a" stroke-width="1.5"/><path d="M4.2 4.2L11.8 11.8" stroke="#6a6a6a" stroke-width="3.4" stroke-linecap="round"/><path d="M4.2 4.2L11.8 11.8" stroke="#f6f6f6" stroke-width="1.6" stroke-linecap="round"/><circle cx="3.3" cy="3.3" r="2.7" fill="#f6f6f6" stroke="#6a6a6a" stroke-width="1.1"/><path d="M0.6 0.6L3.3 3.3" stroke="#dde3f2" stroke-width="2.2"/><circle cx="12.7" cy="12.7" r="2.7" fill="#f6f6f6" stroke="#6a6a6a" stroke-width="1.1"/><path d="M15.4 15.4L12.7 12.7" stroke="#dde3f2" stroke-width="2.2"/><path d="M2.3 13.7L6.8 9.2" stroke="#1d4f9a" stroke-width="3.6" stroke-linecap="round"/><path d="M2.6 13.4L6.6 9.4" stroke="#6aa8ec" stroke-width="1.4" stroke-linecap="round"/></svg>
<svg class="ab" style="left:763px;top:59px" width="16" height="16" viewBox="0 0 16 16"><path d="M1.2 4.5Q1.2 1.2 4.5 1.2M11.5 1.2Q14.8 1.2 14.8 4.5M14.8 11.5Q14.8 14.8 11.5 14.8M4.5 14.8Q1.2 14.8 1.2 11.5" stroke="#b87a20" stroke-width="1.3" fill="none"/><circle cx="8" cy="8" r="6.8" fill="#f7f7f7" stroke="#6e6e70" stroke-width="1"/><circle cx="8" cy="8" r="4.6" fill="none" stroke="#f02828" stroke-width="3.6" stroke-dasharray="3.6 3.63" stroke-dashoffset="1.8" transform="rotate(45 8 8)"/><circle cx="8" cy="8" r="2.9" fill="#dde4f0" stroke="#3a4440" stroke-width="1.1"/></svg>
<svg class="ab" style="left:0;top:140px;overflow:visible" width="70" height="30"><defs><filter id="sh1" x="-50%" y="-80%" width="200%" height="260%"><feGaussianBlur stdDeviation="2.4"/></filter></defs><g transform="translate(3,4.5)" filter="url(#sh1)" opacity=".6"><path d="M5 13.90 H30.4 V7.90 L45.5 15.50 L30.4 23.10 V17.10 H5Z" fill="#2a2a2a"/></g><path d="M5 13.90 H30.4 V7.90 L45.5 15.50 L30.4 23.10 V17.10 H5Z" fill="#cc0010"/></svg>
<svg class="ab" style="left:0;top:372px;overflow:visible" width="70" height="30"><defs><filter id="sh2" x="-50%" y="-80%" width="200%" height="260%"><feGaussianBlur stdDeviation="2.4"/></filter></defs><g transform="translate(3,4.5)" filter="url(#sh2)" opacity=".6"><path d="M5.5 13.40 H19.4 V7.40 L34.5 15.00 L19.4 22.60 V16.60 H5.5Z" fill="#2a2a2a"/></g><path d="M5.5 13.40 H19.4 V7.40 L34.5 15.00 L19.4 22.60 V16.60 H5.5Z" fill="#cc0010"/></svg>
<svg class="ab" style="left:0;top:549px;overflow:visible" width="70" height="30"><defs><filter id="sh3" x="-50%" y="-80%" width="200%" height="260%"><feGaussianBlur stdDeviation="2.4"/></filter></defs><g transform="translate(3,4.5)" filter="url(#sh3)" opacity=".6"><path d="M3.3 14.00 H19.4 V8.00 L34.2 15.60 L19.4 23.20 V17.20 H3.3Z" fill="#2a2a2a"/></g><path d="M3.3 14.00 H19.4 V8.00 L34.2 15.60 L19.4 23.20 V17.20 H3.3Z" fill="#cc0010"/></svg>
</body></html>
